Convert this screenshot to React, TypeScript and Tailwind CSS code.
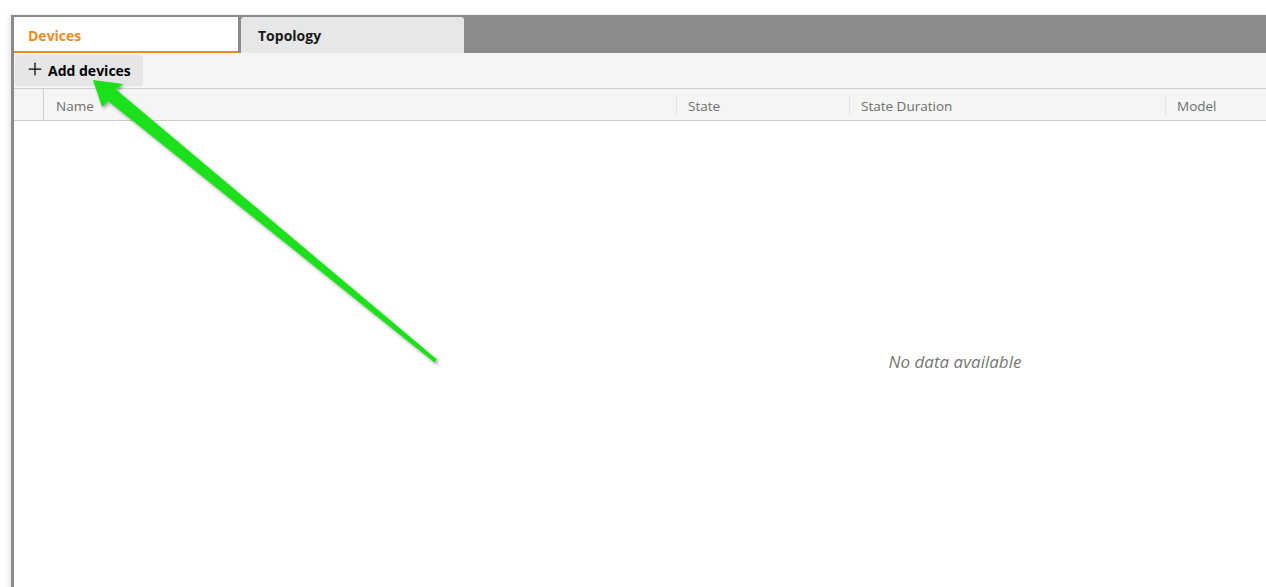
import { Plus } from "lucide-react";

const columns = [
  { label: "Name", width: "w-[632px]" },
  { label: "State", width: "w-[173px]" },
  { label: "State Duration", width: "w-[316px]" },
  { label: "Model", width: "flex-1" },
];

// green annotation arrow drawn over the page
function Arrow() {
  return (
    <svg
      className="pointer-events-none absolute left-0 top-0"
      width="1266"
      height="587"
      viewBox="0 0 1266 587"
    >
      <defs>
        <filter id="arrowShadow" x="-10%" y="-10%" width="130%" height="130%">
          <feDropShadow dx="1.5" dy="2" stdDeviation="1.5" floodColor="#000" floodOpacity="0.35" />
        </filter>
      </defs>
      <polygon
        points="93,80 123,84 116,89.5 437,359.5 434.5,362.5 108,101 102,107"
        fill="#1fe01b"
        filter="url(#arrowShadow)"
      />
    </svg>
  );
}

export default function App() {
  return (
    <div className="relative h-[587px] w-[1266px] overflow-hidden bg-white pl-[11px] pt-[15px] font-['Open_Sans',sans-serif]">
      <div className="flex w-[1885px] flex-col border-l-[3px] border-t-2 border-[#8a8b8a] bg-white shadow-[-3px_0_4px_rgba(0,0,0,0.08)]">
        {/* tabs */}
        <div className="flex h-[36px] gap-[3px] bg-[#8a8b8a]">
          <div className="flex w-[224px] items-center border-b-2 border-[#ef8a1e] bg-white pl-[14px] pt-[2px] text-[14px] font-bold text-[#ef8a1e]">
            Devices
          </div>
          <div className="flex w-[223px] items-center rounded-t-[3px] bg-[#e6e7e8] pl-[17px] text-[14px] font-bold text-[#1a1a1a]">
            Topology
          </div>
        </div>

        {/* toolbar */}
        <div className="flex h-[36px] items-center border-b border-[#cfcfcf] bg-[#f5f5f5] pl-[1px]">
          <button className="flex h-[31px] w-[128px] items-center gap-[3px] rounded-[3px] bg-[#e4e6e7] pl-[10px] text-[14px] font-bold text-black">
            <Plus size={20} strokeWidth={1.5} className="-mt-[3px]" />
            Add devices
          </button>
        </div>

        {/* table header */}
        <div className="flex h-[32px] border-b border-[#cfcfcf] bg-[#f5f5f5] pt-[3px] text-[13.5px] text-[#6e6e6e]">
          <div className="-mt-[3px] w-[30px] border-r border-[#d0d0d0]" />
          {columns.map((col, i) => (
            <div key={col.label} className={`relative flex items-center ${col.width} pl-[12px]`}>
              {i > 0 && <span className="absolute left-0 top-[3px] h-[20px] w-px bg-[#e2e2e2]" />}
              {col.label}
            </div>
          ))}
        </div>

        {/* table body */}
        <div className="flex h-[482px] items-center justify-center bg-white">
          <span className="text-[17px] italic text-[#777777]">No data available</span>
        </div>
      </div>
      <Arrow />
    </div>
  );
}
